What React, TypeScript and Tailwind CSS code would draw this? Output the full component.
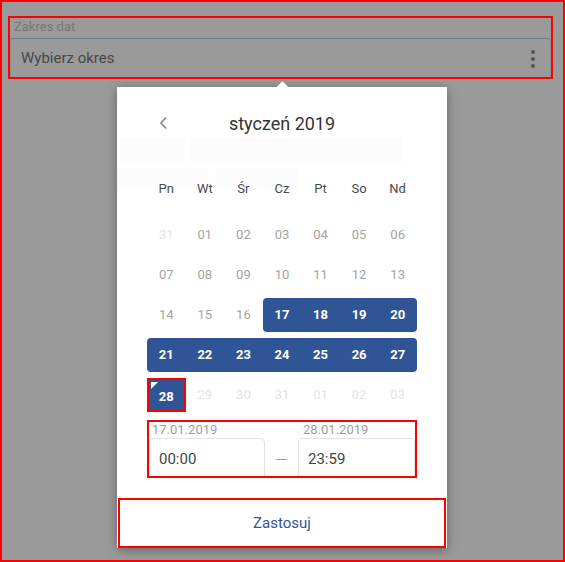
import React from "react";

type Day = { d: string; muted?: "light" | "faint"; sel?: boolean; first?: boolean; last?: boolean; end?: boolean };

const WEEKDAYS = ["Pn", "Wt", "Śr", "Cz", "Pt", "So", "Nd"];

const WEEKS: Day[][] = [
  [
    { d: "31", muted: "faint" },
    { d: "01", muted: "light" },
    { d: "02", muted: "light" },
    { d: "03", muted: "light" },
    { d: "04", muted: "light" },
    { d: "05", muted: "light" },
    { d: "06", muted: "light" },
  ],
  ["07", "08", "09", "10", "11", "12", "13"].map((d) => ({ d, muted: "light" as const })),
  [
    { d: "14", muted: "light" },
    { d: "15", muted: "light" },
    { d: "16", muted: "light" },
    { d: "17", sel: true, first: true },
    { d: "18", sel: true },
    { d: "19", sel: true },
    { d: "20", sel: true, last: true },
  ],
  ["21", "22", "23", "24", "25", "26", "27"].map((d, i) => ({
    d,
    sel: true,
    first: i === 0,
    last: i === 6,
  })),
  [
    { d: "28", end: true },
    { d: "29", muted: "faint" },
    { d: "30", muted: "faint" },
    { d: "31", muted: "faint" },
    { d: "01", muted: "faint" },
    { d: "02", muted: "faint" },
    { d: "03", muted: "faint" },
  ],
];

function DayCell({ day }: { day: Day }) {
  if (day.end) {
    return (
      <div className="relative h-[34px] border-2 border-[#ff0000] bg-[#2f5597] flex items-center justify-center text-[13px] font-bold text-white">
        <span className="absolute left-[2px] top-[2px] w-0 h-0 border-t-[7px] border-r-[7px] border-t-white border-r-transparent" />
        <span className="pt-[3px]">{day.d}</span>
      </div>
    );
  }
  if (day.sel) {
    return (
      <div
        className={
          "h-[34px] bg-[#2f5597] flex items-center justify-center text-[13px] font-bold text-white " +
          (day.first ? "rounded-l-[4px] " : "") +
          (day.last ? "rounded-r-[4px]" : "")
        }
      >
        {day.d}
      </div>
    );
  }
  return (
    <div
      className={
        "h-[34px] flex items-center justify-center text-[13px] " +
        (day.muted === "faint" ? "text-[#e3e3e3]" : "text-[#a3a3a3]")
      }
    >
      {day.d}
    </div>
  );
}

export default function App() {
  return (
    <div
      className="relative w-[565px] h-[562px] bg-[#9a9a9a] border-2 border-[#ff0000] overflow-hidden"
      style={{ fontFamily: "Roboto, 'Liberation Sans', sans-serif" }}
    >
      {/* date range field */}
      <div className="mt-[14px] ml-[6px] w-[545px] h-[63px] border-2 border-[#ff0000] flex flex-col">
        <div className="h-[20px] pl-[4px] text-[13px] leading-[18px] text-[#777777]">Zakres dat</div>
        <div className="flex-1 flex items-center justify-between border border-b-0 border-[#8e8e8e] border-t-[#6f7a90] rounded-t-[4px] pl-[10px] pr-[15px]">
          <span className="text-[15px] text-[#474747] pt-[1px]">Wybierz okres</span>
          <div className="flex flex-col gap-[3px] pt-[1px]">
            <span className="w-[4px] h-[4px] rounded-full bg-[#555555]" />
            <span className="w-[4px] h-[4px] rounded-full bg-[#555555]" />
            <span className="w-[4px] h-[4px] rounded-full bg-[#555555]" />
          </div>
        </div>
      </div>

      {/* picker popup */}
      <div className="absolute left-[115px] top-[85px] w-[330px] h-[461px] bg-white shadow-[0_2px_10px_rgba(0,0,0,0.35)] flex flex-col">
        <span className="absolute left-[161px] top-[-4px] w-[9px] h-[9px] bg-white rotate-45" />
        <div className="absolute left-[3px] top-[51px] w-[64px] h-[24px] bg-[#fcfcfc]" />
        <div className="absolute left-[74px] top-[51px] w-[212px] h-[24px] bg-[#fcfcfc]" />
        <div className="absolute left-0 top-[80px] w-[91px] h-[24px] bg-[#fcfcfc]" />
        <div className="absolute left-[99px] top-[80px] w-[81px] h-[24px] bg-[#fcfcfc]" />

        <div className="relative h-[72px] flex items-center justify-center">
          <svg className="absolute left-[42px] top-[29px]" width="9" height="14" viewBox="0 0 9 14">
            <path d="M7 1.5 L2 7 L7 12.5" fill="none" stroke="#8c8c8c" strokeWidth="1.8" />
          </svg>
          <span className="text-[18px] text-[#333333]">styczeń 2019</span>
        </div>

        <div className="relative h-[59px] ml-[30px] w-[270px] grid grid-cols-[repeat(7,38.57px)] items-center">
          {WEEKDAYS.map((w) => (
            <div key={w} className="text-center text-[13px] text-[#4a4a4a]">
              {w}
            </div>
          ))}
        </div>

        <div className="ml-[30px] w-[270px] flex flex-col gap-[6px]">
          {WEEKS.map((week, i) => (
            <div key={i} className="grid grid-cols-[repeat(7,38.57px)]">
              {week.map((day, j) => (
                <DayCell key={j} day={day} />
              ))}
            </div>
          ))}
        </div>

        <div className="mt-[8px] ml-[30px] w-[270px] h-[58px] border-2 border-[#ff0000] flex flex-col">
          <div className="flex h-[16px] text-[13px] leading-[16px] text-[#a0a0a0]">
            <span className="w-[150px] pl-[3px]">17.01.2019</span>
            <span className="pl-[4px]">28.01.2019</span>
          </div>
          <div className="flex-1 flex items-stretch">
            <div className="w-[116px] border border-b-0 border-[#e2e2e2] rounded-t-[5px] pl-[9px] pt-[9px] text-[15px] text-[#444444]">
              00:00
            </div>
            <div className="w-[33px] flex items-center justify-center pt-[4px]">
              <span className="w-[11px] h-[1px] bg-[#9a9a9a]" />
            </div>
            <div className="w-[117px] border border-b-0 border-[#e2e2e2] rounded-t-[5px] pl-[9px] pt-[9px] text-[15px] text-[#444444]">
              23:59
            </div>
          </div>
        </div>

        <div className="mt-[20px] mx-[1px] h-[50px] border-2 border-[#ff0000] bg-white flex items-center justify-center text-[15px] text-[#2f5597]">
          Zastosuj
        </div>
      </div>
    </div>
  );
}
